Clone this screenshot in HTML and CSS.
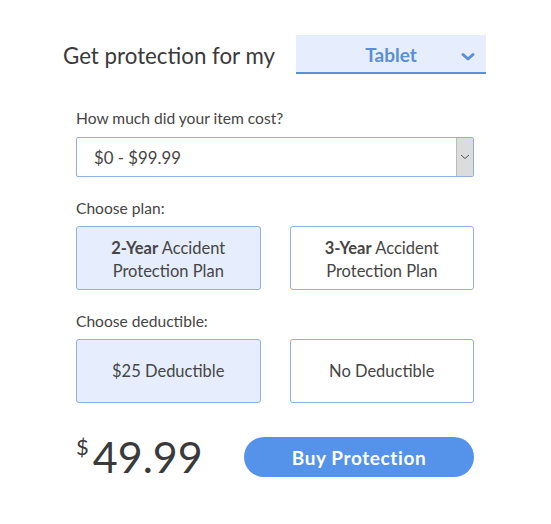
FILE: index.html
```html
<!DOCTYPE html>
<html>
<head>
<meta charset="utf-8">
<link rel="stylesheet" href="styles.css">
</head>
<body>
<div class="page">
  <div class="headline">
    <span class="headline-text">Get protection for my</span>
    <div class="device-select">
      <span class="device-name">Tablet</span>
      <svg class="device-chevron" width="14" height="10" viewBox="0 0 14 10"><path d="M2 2.5 L7 7 L12 2.5" fill="none" stroke="#5b8fd6" stroke-width="3" stroke-linecap="round" stroke-linejoin="round"/></svg>
    </div>
  </div>
  <div class="form">
    <div class="label first">How much did your item cost?</div>
    <div class="cost-select">
      <span class="cost-value">$0 - $99.99</span>
      <span class="cost-arrow"><svg width="10" height="6" viewBox="0 0 10 6"><path d="M1 1 L5 4.5 L9 1" fill="none" stroke="#555" stroke-width="1"/></svg></span>
    </div>
    <div class="label">Choose plan:</div>
    <div class="options">
      <div class="option selected"><span class="plan-text"><b>2-Year</b> Accident<br>Protection Plan</span></div>
      <div class="option"><span class="plan-text"><b>3-Year</b> Accident<br>Protection Plan</span></div>
    </div>
    <div class="label">Choose deductible:</div>
    <div class="options">
      <div class="option selected"><span>$25 Deductible</span></div>
      <div class="option"><span>No Deductible</span></div>
    </div>
    <div class="footer">
      <div class="price"><span class="currency">$</span><span class="amount">49.99</span></div>
      <button class="buy">Buy Protection</button>
    </div>
  </div>
</div>
</body>
</html>
```

FILE: styles.css
```css
* { box-sizing: border-box; }
body {
  margin: 0;
  background: #fff;
  font-family: "Lato", "Open Sans", sans-serif;
  color: #454545;
}
.page {
  padding-top: 35px;
}
.headline {
  display: flex;
  align-items: center;
  margin-left: 63px;
  width: 423px;
}
.headline-text {
  font-size: 22.3px;
  color: #3a3a3a;
  width: 233px;
  position: relative;
  top: 1px;
}
.device-select {
  width: 190px;
  height: 39px;
  background: #e6eefd;
  border-bottom: 2px solid #5b8fd6;
  display: flex;
  align-items: center;
  position: relative;
}
.device-name {
  flex: 1;
  text-align: center;
  font-weight: 700;
  font-size: 19px;
  color: #5b8fd6;
  position: relative;
  top: 1px;
}
.device-chevron {
  position: absolute;
  right: 11px;
  top: 17px;
}
.form {
  margin-left: 76px;
  width: 398px;
}
.label {
  font-size: 15.6px;
  margin-top: 22px;
  margin-bottom: 9px;
  color: #454545;
  line-height: 18px;
}
.label.first { margin-top: 35px; margin-bottom: 10px; }
.cost-select {
  height: 40px;
  border: 1px solid #8fb0e0;
  border-radius: 2px;
  display: flex;
  align-items: stretch;
}
.cost-value {
  flex: 1;
  display: flex;
  align-items: center;
  padding-left: 17px;
  font-size: 16.8px;
}
.cost-arrow {
  width: 17px;
  background: #dcdcdc;
  border-left: 1px solid #bbb;
  display: flex;
  align-items: center;
  justify-content: center;
}
.options {
  display: flex;
  gap: 29px;
}
.option {
  flex: 1;
  height: 64px;
  border: 1px solid #8fb0e0;
  border-radius: 3px;
  display: flex;
  align-items: center;
  justify-content: center;
  text-align: center;
  font-size: 16.5px;
  line-height: 23px;
  background: #fff;
}
.plan-text { padding-top: 3px; }
.option.selected { background: #e6eefd; }
.option b { font-weight: 700; }
.footer {
  display: flex;
  align-items: flex-start;
  justify-content: space-between;
  margin-top: 29px;
}
.price {
  display: flex;
  align-items: flex-start;
  color: #3a3a3a;
}
.currency {
  font-size: 22px;
  margin-right: 4px;
  line-height: 30px;
}
.amount {
  font-size: 43px;
  line-height: 50px;
}
.buy {
  margin-top: 5px;
  width: 230px;
  height: 40px;
  border: none;
  border-radius: 20px;
  background: #5593ea;
  color: #fff;
  font-family: inherit;
  font-weight: 700;
  font-size: 19px;
  letter-spacing: 0.6px;
}
```
